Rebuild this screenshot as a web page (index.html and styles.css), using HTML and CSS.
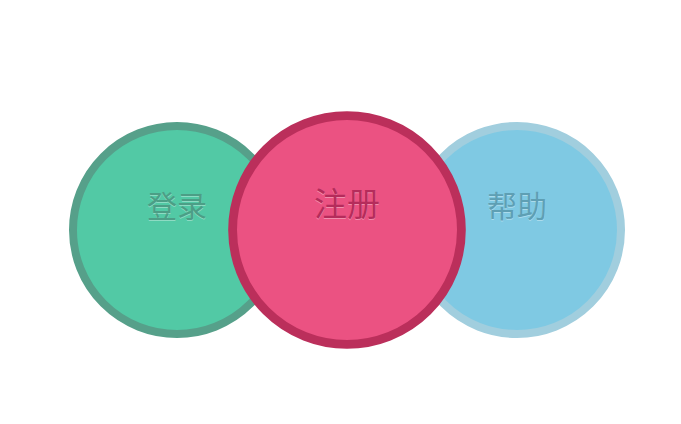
FILE: index.html
```html
<!DOCTYPE html>
<html lang="zh-CN">
<head>
<meta charset="utf-8">
<title>登录 注册 帮助</title>
<link rel="stylesheet" href="styles.css">
</head>
<body>
<div class="stage">
  <div class="ball ball-green"><span class="label">登录</span></div>
  <div class="ball ball-pink"><span class="label">注册</span></div>
  <div class="ball ball-blue"><span class="label">帮助</span></div>
</div>
</body>
</html>
```
FILE: styles.css
```css
html, body {
  margin: 0;
  padding: 0;
  background: #ffffff;
}
.stage {
  display: flex;
  align-items: flex-start;
  padding: 122px 0 0 69px;
  height: 302px;
  font-family: "Noto Sans CJK SC", "Noto Sans", sans-serif;
}
.ball {
  box-sizing: border-box;
  flex: 0 0 auto;
  width: 216px;
  height: 216px;
  border-radius: 50%;
  border: 8px solid;
  display: flex;
  justify-content: center;
  align-items: flex-start;
  padding-top: 52px;
}
.ball + .ball {
  margin-left: -46px;
}
.label {
  font-size: 30px;
  font-weight: 400;
  line-height: 44px;
  text-shadow: 0 1px 0 rgba(255, 255, 255, 0.35);
}
.ball-green {
  background: #52c9a5;
  border-color: #56a08a;
  color: #4c9e86;
}
.ball-pink {
  position: relative;
  z-index: 1;
  transform: scale(1.1);
  background: #eb5282;
  border-color: #bb2f5b;
  color: #b52c5b;
}
.ball-blue {
  background: #7fc9e3;
  border-color: #a1cede;
  color: #5e9fb4;
}
```
